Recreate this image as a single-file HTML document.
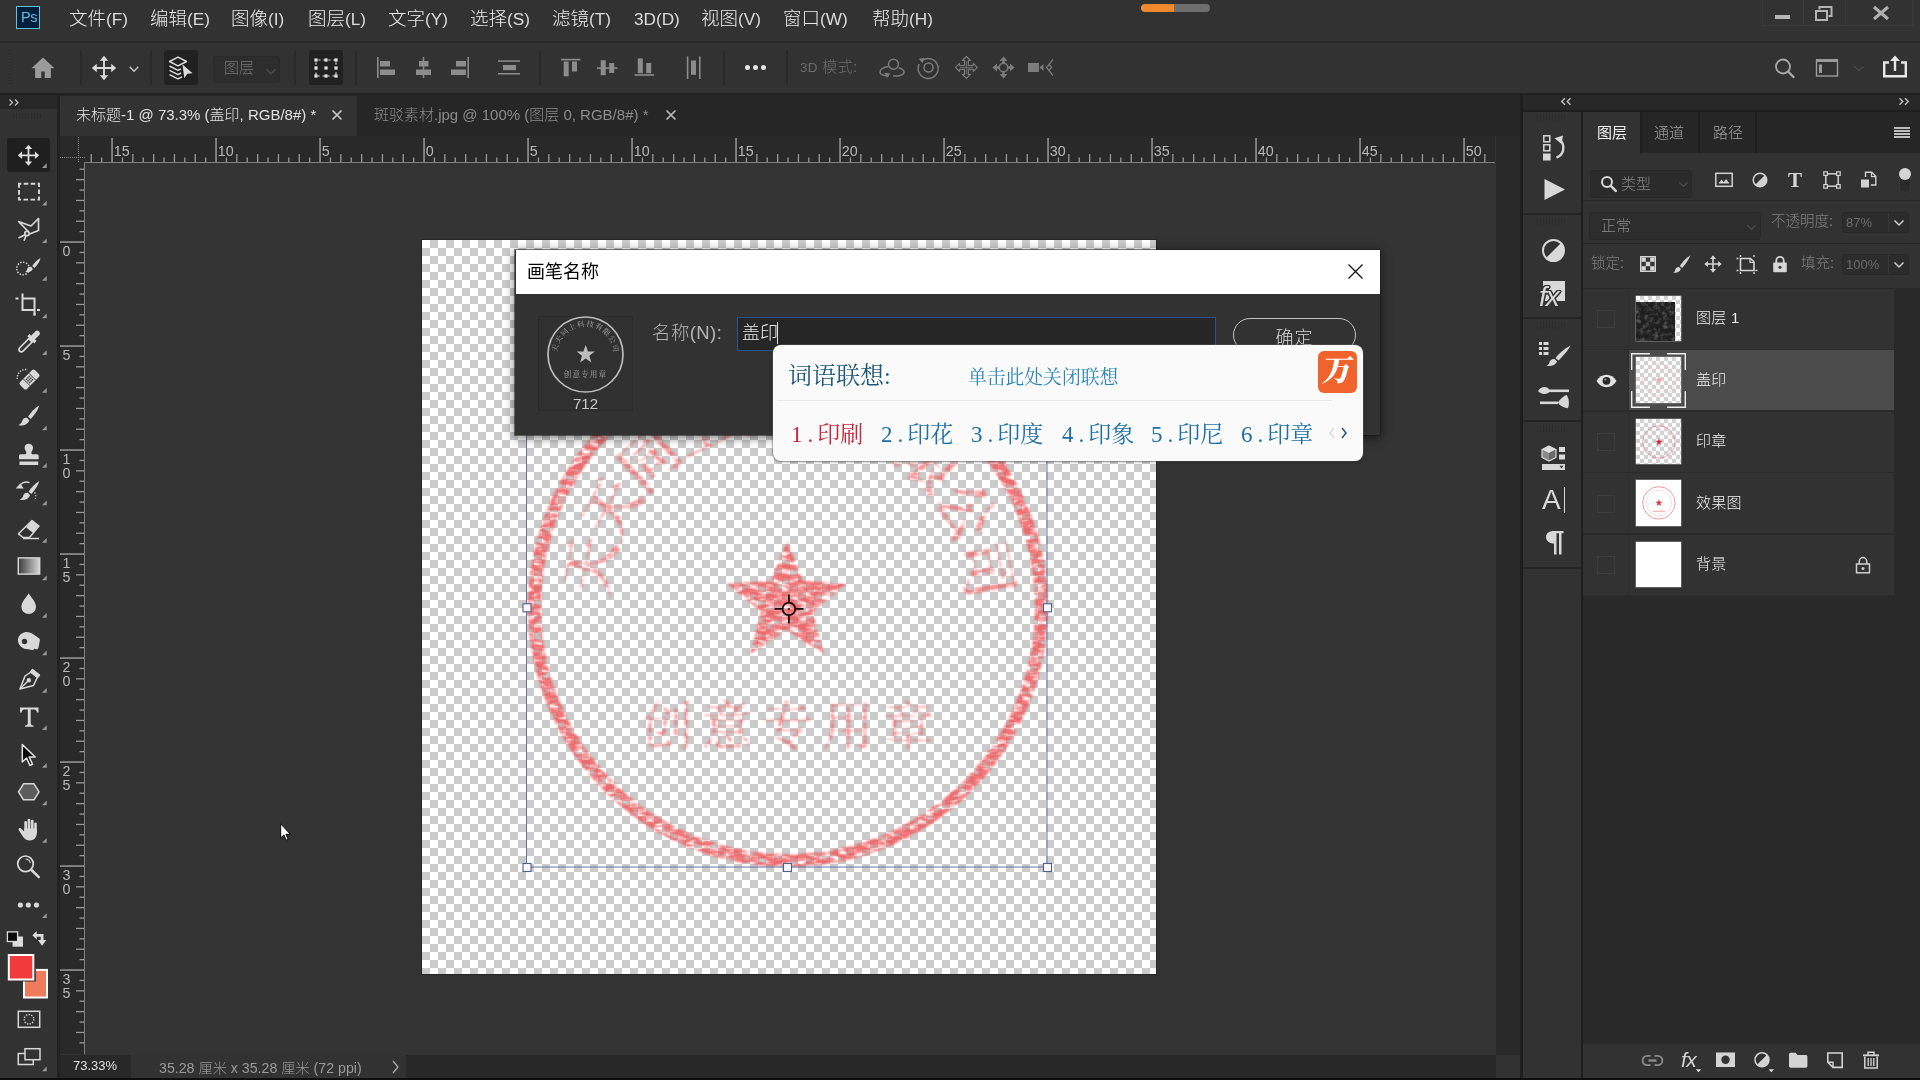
<!DOCTYPE html>
<html lang="zh-CN">
<head>
<meta charset="utf-8">
<title>Photoshop</title>
<style>
html,body{margin:0;padding:0;background:#323232;}
body{width:1920px;height:1080px;overflow:hidden;font-family:"Liberation Sans","Noto Sans CJK SC",sans-serif;color:#d6d6d6;}
#app{position:relative;width:1920px;height:1080px;overflow:hidden;background:#323232;will-change:transform;}
.a{position:absolute;}
.t{position:absolute;white-space:nowrap;line-height:1;}
svg{position:absolute;overflow:visible;}
.mn{top:10px;font-size:18.5px;color:#ececec;font-weight:300;}
.sep{top:50px;width:2px;height:35px;background:#2a2a2a;}
.ime{font-family:"Liberation Serif","Noto Serif CJK SC",serif;}
.dg{display:inline-block;width:13.6px;text-align:center;}
.grip{width:30px;height:7px;background:repeating-linear-gradient(to right,#2a2a2a 0 1px,transparent 1px 3px);opacity:.7}
.la{font-size:17.2px;color:#dcdcdc;}

</style>
</head>
<body>
<div id="app">
<div class="a" style="left:0;top:0;width:1920px;height:41px;background:#323232"></div>
<div class="a" style="left:0;top:41px;width:1920px;height:2px;background:#292929"></div>
<div class="a" style="left:0;top:43px;width:1920px;height:50px;background:#323232"></div>
<div class="a" style="left:0;top:92.500px;width:1920px;height:2.500px;background:#212121"></div>
<!-- left toolbar -->
<div class="a" style="left:0;top:95px;width:57px;height:985px;background:#323232"></div>
<div class="a" style="left:0;top:95px;width:57px;height:14px;background:#272727"></div>
<div class="a" style="left:57px;top:95px;width:3px;height:985px;background:#212121"></div>
<!-- doc tab bar -->
<div class="a" style="left:60px;top:95px;width:1460px;height:41px;background:#262626"></div>
<div class="a" style="left:60px;top:95.500px;width:297px;height:40.500px;background:#323232"></div>
<!-- rulers -->
<div class="a" style="left:60px;top:136px;width:1435px;height:27px;background:#292929"></div>
<div class="a" style="left:60px;top:163px;width:24px;height:891px;background:#292929"></div>
<!-- canvas area -->
<div class="a" style="left:84px;top:163px;width:1411.500px;height:891.500px;background:#333333"></div>
<!-- right scroll -->
<div class="a" style="left:1495.500px;top:136px;width:24.500px;height:918.500px;background:#292929"></div>
<!-- status bar -->
<div class="a" style="left:60px;top:1054.500px;width:1460px;height:24px;background:#282828"></div>
<div class="a" style="left:1495.500px;top:1054.500px;width:24.500px;height:24px;background:#323232"></div>
<!-- right dock -->
<div class="a" style="left:1520px;top:95px;width:400px;height:985px;background:#1e1e1e"></div>
<div class="a" style="left:1522.500px;top:95px;width:397.500px;height:15px;background:#272727"></div>
<div class="a" style="left:1522.500px;top:111.500px;width:58px;height:966.500px;background:#323232"></div>
<div class="a" style="left:1582.500px;top:111.500px;width:337.500px;height:966.500px;background:#323232"></div>
<div class="a" style="left:0;top:1078px;width:1920px;height:2px;background:#0e0e0e"></div>
<!-- PS logo -->
<div class="a" style="left:16px;top:6px;width:24px;height:22.500px;background:#021e3a;border:1.500px solid #5cc3d8;box-sizing:border-box"></div>
<div class="t" style="left:21px;top:10px;font-size:14.500px;color:#5dbde0;letter-spacing:-0.300px;font-family:'Liberation Sans',sans-serif">Ps</div>
<div class="t mn" style="left:69px;">文件<span class="la">(F)</span></div>
<div class="t mn" style="left:150px;">编辑<span class="la">(E)</span></div>
<div class="t mn" style="left:231px;">图像<span class="la">(I)</span></div>
<div class="t mn" style="left:308px;">图层<span class="la">(L)</span></div>
<div class="t mn" style="left:388px;">文字<span class="la">(Y)</span></div>
<div class="t mn" style="left:470px;">选择<span class="la">(S)</span></div>
<div class="t mn" style="left:552px;">滤镜<span class="la">(T)</span></div>
<div class="t mn" style="left:634px;"><span class="la">3D(D)</span></div>
<div class="t mn" style="left:701px;">视图<span class="la">(V)</span></div>
<div class="t mn" style="left:783px;">窗口<span class="la">(W)</span></div>
<div class="t mn" style="left:872px;">帮助<span class="la">(H)</span></div>
<!-- orange progress pill -->
<div class="a" style="left:1141px;top:4px;width:69px;height:8px;border-radius:4px;background:#6e6e6e;overflow:hidden"><div style="width:33px;height:8px;background:#f08a2c;border-radius:4px 0 0 4px"></div></div>
<!-- window controls -->
<div class="a" style="left:1762px;top:0;width:151px;height:26px;border:1px solid #3a3a3a;border-top:none;box-sizing:border-box"></div>
<div class="a" style="left:1803px;top:0;width:1px;height:26px;background:#3a3a3a"></div>
<div class="a" style="left:1845px;top:0;width:1px;height:26px;background:#3a3a3a"></div>
<div class="a" style="left:1775px;top:15px;width:15px;height:4px;background:#b4b4b4"></div>
<svg style="left:1814px;top:5px" width="20" height="18" viewBox="0 0 20 18"><path d="M5.5 4.5V2h12v9h-3" fill="none" stroke="#b4b4b4" stroke-width="2"/><rect x="2" y="6" width="11" height="9" fill="none" stroke="#b4b4b4" stroke-width="2"/></svg>
<svg style="left:1872px;top:5px" width="18" height="16" viewBox="0 0 18 16"><path d="M2 2l14 12M16 2L2 14" fill="none" stroke="#b0b0b0" stroke-width="3"/></svg>
<!-- gripper -->
<div class="a" style="left:8px;top:50px;width:5px;height:35px;background:repeating-linear-gradient(to bottom,#2a2a2a 0 1px,transparent 1px 3px);opacity:.55"></div>
<!-- separators -->
<div class="a sep" style="left:80px"></div>
<div class="a sep" style="left:150px"></div>
<div class="a sep" style="left:294px"></div>
<div class="a sep" style="left:355px"></div>
<div class="a sep" style="left:539px"></div>
<div class="a sep" style="left:723px"></div>
<div class="a sep" style="left:786px"></div>
<!-- home -->
<svg style="left:30px;top:56px" width="26" height="24" viewBox="0 0 26 24"><path d="M13 1.5L1.5 12.2h3.6V22h6.2v-6.6h3.4V22h6.2v-9.8h3.6z" fill="#9b9b9b"/></svg>
<!-- move tool -->
<svg style="left:91px;top:55px" width="26" height="26" viewBox="0 0 26 26"><g fill="none" stroke="#dadada" stroke-width="1.9"><path d="M13 3v20M3 13h20"/></g><path d="M13 0.8l4.2 5H8.8zM13 25.2l4.2-5H8.800zM0.800 13l5-4.200v8.400zM25.200 13l-5-4.200v8.400z" fill="#dadada"/></svg>
<svg style="left:127px;top:65px" width="14" height="9" viewBox="0 0 14 9"><path d="M2.700 1.800L7 6.300L11.300 1.800" fill="none" stroke="#c4c4c4" stroke-width="1.400"/></svg>
<!-- auto select -->
<div class="a" style="left:164px;top:50px;width:34px;height:35px;background:#212121;border-radius:3px"></div>
<svg style="left:168px;top:56px" width="26" height="25" viewBox="0 0 26 25"><g fill="none" stroke="#dcdcdc" stroke-width="1.500" stroke-linejoin="round"><path d="M10 1.200L18.500 5.500L10 9.800L1.500 5.500Z"/><path d="M1.500 10L10 14.300L13 12.800"/><path d="M1.500 14.300L10 18.600L13 17"/><path d="M1.500 18.600L10 22.900L14 20.800"/></g><path d="M14.500 8.500L24.500 17.200L19.300 17.700L16.300 22.300Z" fill="#dcdcdc"/></svg>
<!-- layer dropdown -->
<div class="a" style="left:213px;top:56px;width:67px;height:27px;background:#2d2d2d;border:1px solid #2a2a2a;border-radius:3px;box-sizing:border-box"></div>
<div class="t" style="left:224px;top:60px;font-size:15px;color:#767676;font-weight:300">图层</div>
<svg style="left:264.500px;top:68px" width="12" height="8" viewBox="0 0 12 8"><path d="M1.500 1.500L6 5.800L10.500 1.500" fill="none" stroke="#4e4e4e" stroke-width="1.500"/></svg>
<!-- transform controls -->
<div class="a" style="left:309px;top:50px;width:34px;height:35px;background:#212121;border-radius:3px"></div>
<svg style="left:313px;top:57px" width="26" height="22" viewBox="0 0 26 22"><rect x="3" y="3" width="20" height="16" fill="none" stroke="#dcdcdc" stroke-width="1.100" stroke-dasharray="2.200 2.800" stroke-dashoffset="-2.300"/><g fill="#e4e4e4"><rect x="1.4" y="1.4" width="3.200" height="3.200"/><rect x="11.4" y="1.4" width="3.200" height="3.200"/><rect x="21.4" y="1.4" width="3.200" height="3.200"/><rect x="1.4" y="9.4" width="3.200" height="3.200"/><rect x="11.4" y="9.4" width="3.200" height="3.200"/><rect x="21.4" y="9.4" width="3.200" height="3.200"/><rect x="1.4" y="17.4" width="3.200" height="3.200"/><rect x="11.4" y="17.4" width="3.200" height="3.200"/><rect x="21.4" y="17.4" width="3.200" height="3.200"/></g></svg>
<!-- align icons -->
<svg style="left:370px;top:50px" width="340" height="36" viewBox="370 50 340 36"><g fill="#8c8c8c">
<rect x="377" y="57" width="1.600" height="21"/><rect x="380" y="61" width="10" height="5.500"/><rect x="380" y="69.500" width="15" height="5.500"/>
<rect x="422.700" y="57" width="1.600" height="21"/><rect x="419" y="61" width="9.500" height="5.500"/><rect x="416" y="69.500" width="15" height="5.500"/>
<rect x="467.400" y="57" width="1.600" height="21"/><rect x="456" y="61" width="10" height="5.500"/><rect x="451" y="69.500" width="15" height="5.500"/>
<rect x="498" y="60.300" width="22" height="1.500"/><rect x="498" y="73" width="22" height="1.500"/><rect x="503" y="65" width="13" height="5.200"/>
<rect x="561" y="58.800" width="19.500" height="1.600"/><rect x="563.700" y="61.500" width="5" height="14.800"/><rect x="572" y="61.500" width="5" height="10"/>
<rect x="597" y="67.300" width="20.500" height="1.600"/><rect x="600.700" y="60.200" width="5" height="15"/><rect x="609.200" y="63" width="5" height="10"/>
<rect x="634.500" y="74.200" width="19.500" height="1.600"/><rect x="637.800" y="58.400" width="5" height="14.800"/><rect x="646.200" y="63" width="5" height="10.200"/>
<rect x="686.800" y="56.500" width="1.600" height="22.500"/><rect x="699" y="56.500" width="1.600" height="22.500"/><rect x="691" y="60.500" width="5" height="14.300"/>
</g></svg>
<!-- dots -->
<div class="a" style="left:744.500px;top:65.300px;width:5px;height:5px;border-radius:50%;background:#e6e6e6"></div>
<div class="a" style="left:753px;top:65.300px;width:5px;height:5px;border-radius:50%;background:#e6e6e6"></div>
<div class="a" style="left:761.300px;top:65.300px;width:5px;height:5px;border-radius:50%;background:#e6e6e6"></div>
<div class="t" style="left:800px;top:59px;font-size:15px;color:#6c6c6c;font-weight:300;letter-spacing:0.3px"><span style="font-size:13.5px">3D</span> 模式:</div>
<!-- 3D icons -->
<svg style="left:876px;top:54px" width="182" height="28" viewBox="876 54 182 28"><g fill="none" stroke="#7c7c7c" stroke-width="1.500">
<circle cx="893.500" cy="64.300" r="5"/><path d="M888.500 66.500c-5 0.500-9 3-8.500 6s6 3.500 9 3M893 75.800c4.500 0.500 10.500-0.500 11-3.200 0.400-2-2-3.800-5.500-4.800"/>
<path d="M922.500 60.200A10 10 0 1 1 919.200 64"/><circle cx="928.500" cy="67.500" r="4.500"/>
</g><g fill="#7c7c7c">
<path d="M884.500 72.800l6 0.700-3.500 4.300z"/><path d="M918.800 58.800l5.700-0.800-2 5.300z"/>
<path d="M968.3 65.5L968.3 60.5L970.4 60.5L966.4 56.5L962.4 60.5L964.5 60.5L964.5 65.5L964.5 65.5L959.5 65.5L959.5 63.4L955.5 67.4L959.5 71.4L959.5 69.3L964.5 69.3L964.5 69.3L964.5 74.3L962.4 74.3L966.4 78.3L970.4 74.3L968.3 74.3L968.3 69.3L968.3 69.3L973.3 69.3L973.3 71.4L977.3 67.4L973.3 63.4L973.3 65.5L968.3 65.5z" fill="none" stroke="#7c7c7c" stroke-width="1.200" stroke-linejoin="round"/><path d="M966.400 61v13M960 67.400h13" stroke="#7c7c7c" stroke-width="0.800"/>
<path d="M1003.500 56.500l4 4.500h-8zM1003.500 78.500l4-4.500h-8zM992.500 67.500l4.500-4v8zM1014.500 67.500l-4.500-4v8z"/>
</g><circle cx="1003.500" cy="67.500" r="4.300" fill="none" stroke="#7c7c7c" stroke-width="1.500"/>
<path d="M1003.500 61v2M1003.500 72v2M997 67.500h2M1008 67.500h2" stroke="#7c7c7c" stroke-width="2.500"/>
<rect x="1028" y="63" width="11" height="9" fill="#7c7c7c"/><path d="M1039.500 67.500l4-3.500v7z" fill="#7c7c7c"/><path d="M1053 59.500l-6.500 8l6.500 8M1049 64.500l2.500 3l-2.500 3" fill="none" stroke="#7c7c7c" stroke-width="1.200"/>
</svg>
<!-- right side icons -->
<svg style="left:1772px;top:56px" width="24" height="24" viewBox="1772 56 24 24"><circle cx="1783" cy="66.500" r="7" fill="none" stroke="#a8a8a8" stroke-width="1.800"/><path d="M1788 71.500l5.500 5.500" stroke="#a8a8a8" stroke-width="2.400" stroke-linecap="round"/></svg>
<svg style="left:1815px;top:58px" width="24" height="20" viewBox="0 0 24 20"><rect x="1.500" y="2.500" width="21" height="15.500" fill="none" stroke="#9a9a9a" stroke-width="1.400"/><rect x="1" y="1" width="22" height="3" fill="#9a9a9a"/><rect x="4" y="6.500" width="3" height="8.500" fill="#9a9a9a"/></svg>
<svg style="left:1853px;top:65px" width="12" height="8" viewBox="0 0 12 8"><path d="M1.500 1.500L6 5.500L10.500 1.500" fill="none" stroke="#484848" stroke-width="1.600"/></svg>
<svg style="left:1882px;top:55px" width="26" height="24" viewBox="0 0 26 24"><path d="M7 7.500H2.200V21.200H23.800V7.500H19" fill="none" stroke="#e8e8e8" stroke-width="2.400"/><path d="M13 16V4" stroke="#e8e8e8" stroke-width="2.400"/><path d="M13 0.500l5 5.500h-10z" fill="#e8e8e8"/></svg>
<div class="t" style="left:76px;top:107px;font-size:15px;color:#e2e2e2;font-weight:300">未标题-1 @ 73.3% (盖印, RGB/8#) *</div>
<svg style="left:331px;top:109px" width="12" height="12" viewBox="0 0 12 12"><path d="M1.500 1.500l9 9M10.500 1.500l-9 9" stroke="#c8c8c8" stroke-width="1.700" fill="none"/></svg>
<div class="t" style="left:374px;top:107px;font-size:15px;color:#8c8c8c;font-weight:300">斑驳素材.jpg @ 100% (图层 0, RGB/8#) *</div>
<svg style="left:665px;top:109px" width="12" height="12" viewBox="0 0 12 12"><path d="M1.500 1.500l9 9M10.500 1.500l-9 9" stroke="#b8b8b8" stroke-width="1.700" fill="none"/></svg>
<!-- left collapse arrows -->
<svg style="left:8px;top:98px" width="14" height="9" viewBox="0 0 14 9"><path d="M1.500 1.500l3 3-3 3M7 1.500l3 3-3 3" stroke="#c0c0c0" stroke-width="1.300" fill="none"/></svg>
<!-- status bar -->
<div class="a" style="left:131px;top:1054px;width:275px;height:24px;background:#323232"></div>
<div class="t" style="left:73px;top:1059px;font-size:13px;color:#e0e0e0">73.33%</div>
<div class="t" style="left:159px;top:1060.500px;font-size:14.200px;color:#9a9a9a;font-weight:300">35.28 厘米 x 35.28 厘米 (72 ppi)</div>
<svg style="left:391px;top:1060px" width="9" height="14" viewBox="0 0 9 14"><path d="M2 1l5 6-5 6" stroke="#b0b0b0" stroke-width="1.200" fill="none"/></svg>
<svg style="left:60px;top:135px" width="1435" height="919" viewBox="60 135 1435 919" font-family="Liberation Sans, sans-serif" font-size="14.300" fill="#b8b8b8">
<path d="M60 157.500H86M78.500 137V163" stroke="#8a8a8a" stroke-width="1" stroke-dasharray="1 1" fill="none"/>
<rect x="84" y="162" width="1411" height="1" fill="#808080"/>
<rect x="84" y="162" width="1" height="892" fill="#808080"/>
<text x="113.8" y="156">15</text>
<text x="217.8" y="156">10</text>
<text x="321.8" y="156">5</text>
<text x="425.8" y="156">0</text>
<text x="529.8" y="156">5</text>
<text x="633.8" y="156">10</text>
<text x="737.8" y="156">15</text>
<text x="841.8" y="156">20</text>
<text x="945.8" y="156">25</text>
<text x="1049.8" y="156">30</text>
<text x="1153.8" y="156">35</text>
<text x="1257.8" y="156">40</text>
<text x="1361.8" y="156">45</text>
<text x="1465.8" y="156">50</text>
<text x="62.500" y="256.2">0</text>
<text x="62.500" y="360.2">5</text>
<text x="62.500" y="464.2">1</text>
<text x="62.500" y="478.4">0</text>
<text x="62.500" y="568.2">1</text>
<text x="62.500" y="582.4">5</text>
<text x="62.500" y="672.2">2</text>
<text x="62.500" y="686.4">0</text>
<text x="62.500" y="776.2">2</text>
<text x="62.500" y="790.4">5</text>
<text x="62.500" y="880.2">3</text>
<text x="62.500" y="894.4">0</text>
<text x="62.500" y="984.2">3</text>
<text x="62.500" y="998.4">5</text>
<g fill="#9a9a9a"><rect x="90.6" y="154" width="1.300" height="8"/><rect x="101.0" y="157.500" width="1.300" height="4.500"/><rect x="111.3" y="138" width="1.500" height="24"/><rect x="121.8" y="157.500" width="1.300" height="4.500"/><rect x="132.2" y="154" width="1.300" height="8"/><rect x="142.6" y="157.500" width="1.300" height="4.500"/><rect x="153.0" y="154" width="1.300" height="8"/><rect x="163.4" y="157.500" width="1.300" height="4.500"/><rect x="173.8" y="154" width="1.300" height="8"/><rect x="184.2" y="157.500" width="1.300" height="4.500"/><rect x="194.6" y="154" width="1.300" height="8"/><rect x="205.0" y="157.500" width="1.300" height="4.500"/><rect x="215.3" y="138" width="1.500" height="24"/><rect x="225.8" y="157.500" width="1.300" height="4.500"/><rect x="236.2" y="154" width="1.300" height="8"/><rect x="246.6" y="157.500" width="1.300" height="4.500"/><rect x="257.0" y="154" width="1.300" height="8"/><rect x="267.4" y="157.500" width="1.300" height="4.500"/><rect x="277.8" y="154" width="1.300" height="8"/><rect x="288.2" y="157.500" width="1.300" height="4.500"/><rect x="298.6" y="154" width="1.300" height="8"/><rect x="309.0" y="157.500" width="1.300" height="4.500"/><rect x="319.3" y="138" width="1.500" height="24"/><rect x="329.8" y="157.500" width="1.300" height="4.500"/><rect x="340.2" y="154" width="1.300" height="8"/><rect x="350.6" y="157.500" width="1.300" height="4.500"/><rect x="361.0" y="154" width="1.300" height="8"/><rect x="371.4" y="157.500" width="1.300" height="4.500"/><rect x="381.8" y="154" width="1.300" height="8"/><rect x="392.2" y="157.500" width="1.300" height="4.500"/><rect x="402.6" y="154" width="1.300" height="8"/><rect x="413.0" y="157.500" width="1.300" height="4.500"/><rect x="423.3" y="138" width="1.500" height="24"/><rect x="433.8" y="157.500" width="1.300" height="4.500"/><rect x="444.2" y="154" width="1.300" height="8"/><rect x="454.6" y="157.500" width="1.300" height="4.500"/><rect x="465.0" y="154" width="1.300" height="8"/><rect x="475.4" y="157.500" width="1.300" height="4.500"/><rect x="485.8" y="154" width="1.300" height="8"/><rect x="496.2" y="157.500" width="1.300" height="4.500"/><rect x="506.6" y="154" width="1.300" height="8"/><rect x="517.0" y="157.500" width="1.300" height="4.500"/><rect x="527.3" y="138" width="1.500" height="24"/><rect x="537.8" y="157.500" width="1.300" height="4.500"/><rect x="548.2" y="154" width="1.300" height="8"/><rect x="558.6" y="157.500" width="1.300" height="4.500"/><rect x="569.0" y="154" width="1.300" height="8"/><rect x="579.4" y="157.500" width="1.300" height="4.500"/><rect x="589.8" y="154" width="1.300" height="8"/><rect x="600.2" y="157.500" width="1.300" height="4.500"/><rect x="610.6" y="154" width="1.300" height="8"/><rect x="621.0" y="157.500" width="1.300" height="4.500"/><rect x="631.3" y="138" width="1.500" height="24"/><rect x="641.8" y="157.500" width="1.300" height="4.500"/><rect x="652.2" y="154" width="1.300" height="8"/><rect x="662.6" y="157.500" width="1.300" height="4.500"/><rect x="673.0" y="154" width="1.300" height="8"/><rect x="683.4" y="157.500" width="1.300" height="4.500"/><rect x="693.8" y="154" width="1.300" height="8"/><rect x="704.2" y="157.500" width="1.300" height="4.500"/><rect x="714.6" y="154" width="1.300" height="8"/><rect x="725.0" y="157.500" width="1.300" height="4.500"/><rect x="735.3" y="138" width="1.500" height="24"/><rect x="745.8" y="157.500" width="1.300" height="4.500"/><rect x="756.2" y="154" width="1.300" height="8"/><rect x="766.6" y="157.500" width="1.300" height="4.500"/><rect x="777.0" y="154" width="1.300" height="8"/><rect x="787.4" y="157.500" width="1.300" height="4.500"/><rect x="797.8" y="154" width="1.300" height="8"/><rect x="808.2" y="157.500" width="1.300" height="4.500"/><rect x="818.6" y="154" width="1.300" height="8"/><rect x="829.0" y="157.500" width="1.300" height="4.500"/><rect x="839.3" y="138" width="1.500" height="24"/><rect x="849.8" y="157.500" width="1.300" height="4.500"/><rect x="860.2" y="154" width="1.300" height="8"/><rect x="870.6" y="157.500" width="1.300" height="4.500"/><rect x="881.0" y="154" width="1.300" height="8"/><rect x="891.4" y="157.500" width="1.300" height="4.500"/><rect x="901.8" y="154" width="1.300" height="8"/><rect x="912.2" y="157.500" width="1.300" height="4.500"/><rect x="922.6" y="154" width="1.300" height="8"/><rect x="933.0" y="157.500" width="1.300" height="4.500"/><rect x="943.3" y="138" width="1.500" height="24"/><rect x="953.8" y="157.500" width="1.300" height="4.500"/><rect x="964.2" y="154" width="1.300" height="8"/><rect x="974.6" y="157.500" width="1.300" height="4.500"/><rect x="985.0" y="154" width="1.300" height="8"/><rect x="995.4" y="157.500" width="1.300" height="4.500"/><rect x="1005.8" y="154" width="1.300" height="8"/><rect x="1016.2" y="157.500" width="1.300" height="4.500"/><rect x="1026.6" y="154" width="1.300" height="8"/><rect x="1037.0" y="157.500" width="1.300" height="4.500"/><rect x="1047.3" y="138" width="1.500" height="24"/><rect x="1057.8" y="157.500" width="1.300" height="4.500"/><rect x="1068.2" y="154" width="1.300" height="8"/><rect x="1078.6" y="157.500" width="1.300" height="4.500"/><rect x="1089.0" y="154" width="1.300" height="8"/><rect x="1099.4" y="157.500" width="1.300" height="4.500"/><rect x="1109.8" y="154" width="1.300" height="8"/><rect x="1120.2" y="157.500" width="1.300" height="4.500"/><rect x="1130.6" y="154" width="1.300" height="8"/><rect x="1141.0" y="157.500" width="1.300" height="4.500"/><rect x="1151.3" y="138" width="1.500" height="24"/><rect x="1161.8" y="157.500" width="1.300" height="4.500"/><rect x="1172.2" y="154" width="1.300" height="8"/><rect x="1182.6" y="157.500" width="1.300" height="4.500"/><rect x="1193.0" y="154" width="1.300" height="8"/><rect x="1203.4" y="157.500" width="1.300" height="4.500"/><rect x="1213.8" y="154" width="1.300" height="8"/><rect x="1224.2" y="157.500" width="1.300" height="4.500"/><rect x="1234.6" y="154" width="1.300" height="8"/><rect x="1245.0" y="157.500" width="1.300" height="4.500"/><rect x="1255.3" y="138" width="1.500" height="24"/><rect x="1265.8" y="157.500" width="1.300" height="4.500"/><rect x="1276.2" y="154" width="1.300" height="8"/><rect x="1286.6" y="157.500" width="1.300" height="4.500"/><rect x="1297.0" y="154" width="1.300" height="8"/><rect x="1307.4" y="157.500" width="1.300" height="4.500"/><rect x="1317.8" y="154" width="1.300" height="8"/><rect x="1328.2" y="157.500" width="1.300" height="4.500"/><rect x="1338.6" y="154" width="1.300" height="8"/><rect x="1349.0" y="157.500" width="1.300" height="4.500"/><rect x="1359.3" y="138" width="1.500" height="24"/><rect x="1369.8" y="157.500" width="1.300" height="4.500"/><rect x="1380.2" y="154" width="1.300" height="8"/><rect x="1390.6" y="157.500" width="1.300" height="4.500"/><rect x="1401.0" y="154" width="1.300" height="8"/><rect x="1411.4" y="157.500" width="1.300" height="4.500"/><rect x="1421.8" y="154" width="1.300" height="8"/><rect x="1432.2" y="157.500" width="1.300" height="4.500"/><rect x="1442.6" y="154" width="1.300" height="8"/><rect x="1453.0" y="157.500" width="1.300" height="4.500"/><rect x="1463.3" y="138" width="1.500" height="24"/><rect x="1473.8" y="157.500" width="1.300" height="4.500"/><rect x="1484.2" y="154" width="1.300" height="8"/><rect x="79.500" y="168.6" width="4.500" height="1.300"/><rect x="76" y="179.0" width="8" height="1.300"/><rect x="79.500" y="189.4" width="4.500" height="1.300"/><rect x="76" y="199.8" width="8" height="1.300"/><rect x="79.500" y="210.2" width="4.500" height="1.300"/><rect x="76" y="220.6" width="8" height="1.300"/><rect x="79.500" y="231.0" width="4.500" height="1.300"/><rect x="60" y="241.3" width="24" height="1.500"/><rect x="79.500" y="251.8" width="4.500" height="1.300"/><rect x="76" y="262.2" width="8" height="1.300"/><rect x="79.500" y="272.6" width="4.500" height="1.300"/><rect x="76" y="283.0" width="8" height="1.300"/><rect x="79.500" y="293.4" width="4.500" height="1.300"/><rect x="76" y="303.8" width="8" height="1.300"/><rect x="79.500" y="314.2" width="4.500" height="1.300"/><rect x="76" y="324.6" width="8" height="1.300"/><rect x="79.500" y="335.0" width="4.500" height="1.300"/><rect x="60" y="345.3" width="24" height="1.500"/><rect x="79.500" y="355.8" width="4.500" height="1.300"/><rect x="76" y="366.2" width="8" height="1.300"/><rect x="79.500" y="376.6" width="4.500" height="1.300"/><rect x="76" y="387.0" width="8" height="1.300"/><rect x="79.500" y="397.4" width="4.500" height="1.300"/><rect x="76" y="407.8" width="8" height="1.300"/><rect x="79.500" y="418.2" width="4.500" height="1.300"/><rect x="76" y="428.6" width="8" height="1.300"/><rect x="79.500" y="439.0" width="4.500" height="1.300"/><rect x="60" y="449.3" width="24" height="1.500"/><rect x="79.500" y="459.8" width="4.500" height="1.300"/><rect x="76" y="470.2" width="8" height="1.300"/><rect x="79.500" y="480.6" width="4.500" height="1.300"/><rect x="76" y="491.0" width="8" height="1.300"/><rect x="79.500" y="501.4" width="4.500" height="1.300"/><rect x="76" y="511.8" width="8" height="1.300"/><rect x="79.500" y="522.2" width="4.500" height="1.300"/><rect x="76" y="532.6" width="8" height="1.300"/><rect x="79.500" y="543.0" width="4.500" height="1.300"/><rect x="60" y="553.3" width="24" height="1.500"/><rect x="79.500" y="563.8" width="4.500" height="1.300"/><rect x="76" y="574.2" width="8" height="1.300"/><rect x="79.500" y="584.6" width="4.500" height="1.300"/><rect x="76" y="595.0" width="8" height="1.300"/><rect x="79.500" y="605.4" width="4.500" height="1.300"/><rect x="76" y="615.8" width="8" height="1.300"/><rect x="79.500" y="626.2" width="4.500" height="1.300"/><rect x="76" y="636.6" width="8" height="1.300"/><rect x="79.500" y="647.0" width="4.500" height="1.300"/><rect x="60" y="657.3" width="24" height="1.500"/><rect x="79.500" y="667.8" width="4.500" height="1.300"/><rect x="76" y="678.2" width="8" height="1.300"/><rect x="79.500" y="688.6" width="4.500" height="1.300"/><rect x="76" y="699.0" width="8" height="1.300"/><rect x="79.500" y="709.4" width="4.500" height="1.300"/><rect x="76" y="719.8" width="8" height="1.300"/><rect x="79.500" y="730.2" width="4.500" height="1.300"/><rect x="76" y="740.6" width="8" height="1.300"/><rect x="79.500" y="751.0" width="4.500" height="1.300"/><rect x="60" y="761.3" width="24" height="1.500"/><rect x="79.500" y="771.8" width="4.500" height="1.300"/><rect x="76" y="782.2" width="8" height="1.300"/><rect x="79.500" y="792.6" width="4.500" height="1.300"/><rect x="76" y="803.0" width="8" height="1.300"/><rect x="79.500" y="813.4" width="4.500" height="1.300"/><rect x="76" y="823.8" width="8" height="1.300"/><rect x="79.500" y="834.2" width="4.500" height="1.300"/><rect x="76" y="844.6" width="8" height="1.300"/><rect x="79.500" y="855.0" width="4.500" height="1.300"/><rect x="60" y="865.3" width="24" height="1.500"/><rect x="79.500" y="875.8" width="4.500" height="1.300"/><rect x="76" y="886.2" width="8" height="1.300"/><rect x="79.500" y="896.6" width="4.500" height="1.300"/><rect x="76" y="907.0" width="8" height="1.300"/><rect x="79.500" y="917.4" width="4.500" height="1.300"/><rect x="76" y="927.8" width="8" height="1.300"/><rect x="79.500" y="938.2" width="4.500" height="1.300"/><rect x="76" y="948.6" width="8" height="1.300"/><rect x="79.500" y="959.0" width="4.500" height="1.300"/><rect x="60" y="969.3" width="24" height="1.500"/><rect x="79.500" y="979.8" width="4.500" height="1.300"/><rect x="76" y="990.2" width="8" height="1.300"/><rect x="79.500" y="1000.6" width="4.500" height="1.300"/><rect x="76" y="1011.0" width="8" height="1.300"/><rect x="79.500" y="1021.4" width="4.500" height="1.300"/><rect x="76" y="1031.8" width="8" height="1.300"/><rect x="79.500" y="1042.2" width="4.500" height="1.300"/></g>
</svg>
<div class="a" style="left:422px;top:240px;width:734px;height:734px;background:repeating-conic-gradient(#cbcbcb 0 25%,#ffffff 0 50%) 0 0/16px 16px;box-shadow:0 0 0 1px #252525"></div>
<svg style="left:422px;top:240px" width="734" height="733" viewBox="422 240 734 733" font-family="Liberation Serif, Noto Serif CJK SC, serif">
<defs><filter id="rough" x="-5%" y="-5%" width="110%" height="110%"><feTurbulence type="fractalNoise" baseFrequency="0.09 0.2" numOctaves="2" seed="7" result="n"/><feColorMatrix in="n" type="matrix" values="0 0 0 0 0  0 0 0 0 0  0 0 0 0 0  2.500 0 0 0 -0.520" result="m"/><feGaussianBlur in="SourceGraphic" stdDeviation="0.900" result="b"/><feComposite in="b" in2="m" operator="in"/></filter></defs>
<g filter="url(#rough)" opacity="0.820">
<circle cx="788.0" cy="607.0" r="253.500" fill="none" stroke="#f2585c" stroke-width="13"/>
<polygon points="787.0,540.0 802.9,581.1 846.9,583.5 812.8,611.4 824.0,654.0 787.0,630.1 750.0,654.0 761.2,611.4 727.1,583.5 771.1,581.1" fill="#f2585c"/>
<text x="0" y="0" font-size="60" font-weight="600" fill="#f2585c" fill-opacity="0.800" text-anchor="middle" transform="translate(590.7 566.0) rotate(-78.2) scale(0.96 1)" dy="21">天</text>
<text x="0" y="0" font-size="60" font-weight="600" fill="#f2585c" fill-opacity="0.800" text-anchor="middle" transform="translate(612.2 508.5) rotate(-60.8) scale(0.96 1)" dy="21">天</text>
<text x="0" y="0" font-size="60" font-weight="600" fill="#f2585c" fill-opacity="0.800" text-anchor="middle" transform="translate(649.9 460.2) rotate(-43.2) scale(0.96 1)" dy="21">同</text>
<text x="0" y="0" font-size="60" font-weight="600" fill="#f2585c" fill-opacity="0.800" text-anchor="middle" transform="translate(700.5 425.5) rotate(-25.8) scale(0.96 1)" dy="21">上</text>
<text x="0" y="0" font-size="60" font-weight="600" fill="#f2585c" fill-opacity="0.800" text-anchor="middle" transform="translate(759.1 407.6) rotate(-8.2) scale(0.96 1)" dy="21">科</text>
<text x="0" y="0" font-size="60" font-weight="600" fill="#f2585c" fill-opacity="0.800" text-anchor="middle" transform="translate(820.4 408.1) rotate(9.2) scale(0.96 1)" dy="21">技</text>
<text x="0" y="0" font-size="60" font-weight="600" fill="#f2585c" fill-opacity="0.800" text-anchor="middle" transform="translate(878.7 427.1) rotate(26.8) scale(0.96 1)" dy="21">有</text>
<text x="0" y="0" font-size="60" font-weight="600" fill="#f2585c" fill-opacity="0.800" text-anchor="middle" transform="translate(928.6 462.7) rotate(44.2) scale(0.96 1)" dy="21">限</text>
<text x="0" y="0" font-size="60" font-weight="600" fill="#f2585c" fill-opacity="0.800" text-anchor="middle" transform="translate(965.5 511.6) rotate(61.8) scale(0.96 1)" dy="21">公</text>
<text x="0" y="0" font-size="60" font-weight="600" fill="#f2585c" fill-opacity="0.800" text-anchor="middle" transform="translate(986.0 569.4) rotate(79.2) scale(0.96 1)" dy="21">司</text>
<text x="667.0" y="745" font-size="52" fill="#f2585c" fill-opacity="0.780" text-anchor="middle">创</text>
<text x="727.3" y="745" font-size="52" fill="#f2585c" fill-opacity="0.780" text-anchor="middle">意</text>
<text x="787.6" y="745" font-size="52" fill="#f2585c" fill-opacity="0.780" text-anchor="middle">专</text>
<text x="847.9" y="745" font-size="52" fill="#f2585c" fill-opacity="0.780" text-anchor="middle">用</text>
<text x="908.2" y="745" font-size="52" fill="#f2585c" fill-opacity="0.780" text-anchor="middle">章</text>
</g>
<rect x="526.500" y="347.500" width="520.500" height="519.500" fill="none" stroke="#5f73a8" stroke-width="1"/>
<rect x="523.0" y="603.8" width="8" height="8" fill="#fbfaff" stroke="#4f5f90" stroke-width="1.100"/>
<rect x="1043.5" y="603.8" width="8" height="8" fill="#fbfaff" stroke="#4f5f90" stroke-width="1.100"/>
<rect x="523.0" y="863.5" width="8" height="8" fill="#fbfaff" stroke="#4f5f90" stroke-width="1.100"/>
<rect x="783.5" y="863.5" width="8" height="8" fill="#fbfaff" stroke="#4f5f90" stroke-width="1.100"/>
<rect x="1043.5" y="863.5" width="8" height="8" fill="#fbfaff" stroke="#4f5f90" stroke-width="1.100"/>
<rect x="523.0" y="343.5" width="8" height="8" fill="#fbfaff" stroke="#4f5f90" stroke-width="1.100"/>
<rect x="783.5" y="343.5" width="8" height="8" fill="#fbfaff" stroke="#4f5f90" stroke-width="1.100"/>
<rect x="1043.5" y="343.5" width="8" height="8" fill="#fbfaff" stroke="#4f5f90" stroke-width="1.100"/>
<g fill="none" stroke="#1c0c0c" stroke-width="1.800"><circle cx="788.900" cy="608.900" r="6.300"/><path d="M788.900 594.500v8.500M788.900 615v8.500M774.500 608.900h8.500M795 608.900h8.500"/></g><circle cx="788.900" cy="608.900" r="1.200" fill="#7a1f25"/>
</svg>
<!-- left toolbar -->
<div class="a" style="left:13px;top:113px;width:30px;height:6px;background:repeating-linear-gradient(to right,#2a2a2a 0 1px,transparent 1px 3px)"></div>
<div class="a" style="left:7px;top:138px;width:43px;height:34px;background:#1f1f1f;border-radius:3px"></div>
<svg style="left:0;top:130px" width="60" height="950" viewBox="0 130 60 950">
<g fill="#9a9a9a">
<path d="M46.700 163.300V168H42z"/><path d="M46.700 200.800V205.500H42z"/><path d="M46.700 238.400V243.100H42z"/><path d="M46.700 276V280.700H42z"/><path d="M46.700 313.600V318.300H42z"/>
<path d="M46.700 350.300V355H42z"/><path d="M46.700 388V392.700H42z"/><path d="M46.700 425.500V430.200H42z"/><path d="M46.700 463V467.700H42z"/><path d="M46.700 500.500V505.200H42z"/>
<path d="M46.700 538V542.700H42z"/><path d="M46.700 575.500V580.200H42z"/><path d="M46.700 613V617.700H42z"/><path d="M46.700 650.500V655.200H42z"/><path d="M46.700 688V692.700H42z"/>
<path d="M46.700 725.300V730H42z"/><path d="M46.700 763V767.700H42z"/><path d="M46.700 800.500V805.200H42z"/><path d="M46.700 838V842.700H42z"/><path d="M46.700 913.300V918H42z"/><path d="M46.700 1066.500V1071.200H42z"/>
</g>
<!-- move -->
<g><path d="M28.500 147.500v15.500M20.500 155.300h16" stroke="#dedede" stroke-width="1.800" fill="none"/><path d="M28.500 144.800l3.700 4.300h-7.400zM28.500 165.800l3.700-4.300h-7.400zM17.800 155.300l4.300-3.700v7.400zM39.200 155.300l-4.300-3.700v7.400z" fill="#dedede"/></g>
<!-- marquee -->
<rect x="19" y="183.800" width="20" height="15.800" fill="none" stroke="#d8d8d8" stroke-width="1.900" stroke-dasharray="4.600 2.400" stroke-dashoffset="2.300"/>
<!-- polygonal lasso -->
<g fill="none" stroke="#d8d8d8" stroke-width="1.700" stroke-linejoin="round"><path d="M28.300 231.500L18.500 221.500L31 226L38.500 218.500L38.500 230.500L29.500 234"/><circle cx="27" cy="233.500" r="2.200"/><path d="M25.200 234.800l-6.700 3.200M26 235.800l-2 5"/></g>
<!-- quick selection -->
<g><circle cx="23" cy="268.500" r="6.300" fill="none" stroke="#d8d8d8" stroke-width="1.500" stroke-dasharray="1.400 1.500"/><path d="M40.500 258c-3 1.500-6.500 5-8.300 8l2.300 2c2.800-2.800 5.300-6.300 6-10z" fill="#d8d8d8"/><path d="M31.300 266.800c-2.300-.5-4 .8-4.300 2.700-.2 1.200-.8 2-1.800 2.500 3 .8 6.200-.3 7.700-3z" fill="#d8d8d8"/></g>
<!-- crop -->
<g fill="none" stroke="#d8d8d8" stroke-width="2"><path d="M22.500 293.500v16.500h12"/><path d="M15.500 298.500h3M22 298.500h12.500v11.500M34.500 313v2.500M37 310h3" /><path d="M34.500 310v5.500" /></g>
<!-- eyedropper -->
<g><path d="M29.500 338l3.300 3.300-9.500 9.500c-1 1-2.600 1.200-3.700.4-.8-1.100-.6-2.700.4-3.700z" fill="none" stroke="#d8d8d8" stroke-width="1.700"/><g transform="rotate(45 32 338.500)" fill="#d8d8d8"><rect x="27" y="337" width="10" height="3.300" rx="0.500"/><rect x="29.300" y="328.500" width="5.400" height="10" rx="2.700"/><rect x="29.600" y="339.500" width="4.800" height="2.200"/></g></g>
<!-- spot healing -->
<g><path d="M17.300 379a8.500 8.500 0 0 1 10.500-9.300" fill="none" stroke="#d8d8d8" stroke-width="1.500" stroke-dasharray="1.200 1.500"/><g transform="rotate(-45 29.500 379.500)"><rect x="19" y="374.700" width="21" height="9.600" rx="2" fill="#d8d8d8"/><path d="M25.500 374.700v9.600M33.500 374.700v9.600" stroke="#323232" stroke-width="0.900"/><g fill="#323232"><circle cx="27.500" cy="377.200" r="0.800"/><circle cx="29.500" cy="377.200" r="0.800"/><circle cx="31.500" cy="377.200" r="0.800"/><circle cx="27.500" cy="379.500" r="0.800"/><circle cx="29.500" cy="379.500" r="0.800"/><circle cx="31.500" cy="379.500" r="0.800"/><circle cx="27.500" cy="381.800" r="0.800"/><circle cx="29.500" cy="381.800" r="0.800"/><circle cx="31.500" cy="381.800" r="0.800"/></g></g></g>
<!-- brush -->
<g fill="#d8d8d8"><path d="M39.300 405.600c-4.500 2.600-9 7.300-11.200 11.200l2.700 2.300c3.400-3.700 7-8.300 8.500-13.500z"/><path d="M27 417.800c-2.700-.4-4.500 1.300-4.900 3.500-.3 1.500-1.500 2.800-3.600 3.600 3.800 1.400 8.800.2 10.900-4.500z"/></g>
<!-- stamp -->
<g fill="#d8d8d8"><path d="M28.800 443.700a4.300 4.300 0 0 1 4.300 4.300c0 1.800-1.500 3-1.700 4.500-.1 1 .3 1.800 1.400 1.800h4.200c1 0 1.700.7 1.700 1.700v3.300H19v-3.300c0-1 .7-1.700 1.700-1.700h4.200c1.100 0 1.500-.8 1.400-1.800-.2-1.500-1.700-2.700-1.700-4.500a4.300 4.300 0 0 1 4.200-4.300z"/><rect x="19.500" y="461.500" width="18.700" height="3.500"/></g>
<!-- history brush -->
<g fill="#d8d8d8"><path d="M39.300 481c-4.300 2.600-8.500 7-10.600 10.800l2.600 2.200c3.200-3.600 6.600-8 8-13z"/><path d="M27.800 492.800c-2.600-.4-4.300 1.200-4.700 3.300-.3 1.500-1.400 2.700-3.400 3.500 3.600 1.300 8.400.2 10.400-4.300z"/><path d="M15.700 488.500l4.500-5 3.500 5z"/><path d="M20.500 484.500c2.500-2.500 6-3 9-1.800" fill="none" stroke="#d8d8d8" stroke-width="1.400"/><path d="M34.500 492.500c1.500 2 1.800 4.500 .5 7" fill="none" stroke="#d8d8d8" stroke-width="1.300" stroke-dasharray="1.300 1.500"/></g>
<!-- eraser -->
<g><path d="M32 520.500l7 5.500-9.500 11.500h-6.500l-4.500-3.700z" fill="none" stroke="#d8d8d8" stroke-width="1.500" stroke-linejoin="round"/><path d="M32 520.500l7 5.500-5.800 7-7-5.500z" fill="#d8d8d8"/><path d="M23 538.500h16" stroke="#d8d8d8" stroke-width="1.500"/></g>
<!-- gradient -->
<defs><linearGradient id="gr1" x1="0" x2="1"><stop offset="0" stop-color="#3a3a3a"/><stop offset="1" stop-color="#d8d8d8"/></linearGradient></defs>
<rect x="18.300" y="557.900" width="21.400" height="16.200" fill="url(#gr1)" stroke="#d8d8d8" stroke-width="1.400"/>
<!-- blur drop -->
<path d="M28.700 593.300c2.500 4.500 7.300 8.500 7.300 13.500a7.300 7.300 0 0 1-14.600 0c0-5 4.800-9 7.300-13.500z" fill="#d8d8d8"/>
<!-- sponge -->
<g><path d="M18 641c-.5-4 2.500-8 7-8.800 3-.5 6 .5 9 2.500l5 3.500c.8.600 1 1.500.8 2.500l-1.300 7c-.2 1-1.200 1.700-2.200 1.500l-2.300-.5-.8 1.500-5-1c-4 .3-9.500-2.500-10.200-8.200z" fill="#d8d8d8"/><circle cx="24.500" cy="641.500" r="2.700" fill="#323232"/></g>
<!-- pen -->
<g fill="none" stroke="#d8d8d8" stroke-width="1.500" stroke-linejoin="round"><path d="M31 672l6.500 5-4 8.500-13.500 3.500 5-13z"/><path d="M20.500 688.500l7.500-7.500"/><circle cx="28.800" cy="680.200" r="1.500" fill="#d8d8d8"/><path d="M32.500 669.500l7 5.500-2 2.500-7-5.500z" fill="#d8d8d8"/></g>
<!-- type -->
<path d="M20 707.600h18.500v4.800h-1.600c-.3-2-1-2.800-3-2.800h-3.200v14c0 1.300.8 1.700 2.800 1.800v1.300h-8.500v-1.300c2-.1 2.800-.5 2.800-1.800v-14h-3.200c-2 0-2.700.8-3 2.800H20z" fill="#d8d8d8"/>
<!-- path selection -->
<path d="M22.300 744.500v17.500l4.300-4 3.300 7.500 2.600-1.200-3.300-7.300h6z" fill="#0a0a0a" stroke="#e6e6e6" stroke-width="1.500" stroke-linejoin="round"/>
<!-- polygon -->
<path d="M23.500 783.800h10.500l5 8-5 8h-10.500l-5-8z" fill="#5c5c5c" stroke="#d8d8d8" stroke-width="1.500" stroke-linejoin="round"/>
<!-- hand -->
<g fill="#d8d8d8"><rect x="24.300" y="821" width="2.700" height="12" rx="1.300"/><rect x="27.600" y="818.700" width="2.700" height="14" rx="1.300"/><rect x="30.900" y="819.700" width="2.700" height="13" rx="1.300"/><rect x="34.200" y="822.500" width="2.600" height="11" rx="1.300"/><path d="M24.300 828.500h12.500v4.500c0 4.500-2.800 7.500-6.800 7.500-3.300 0-5.300-1.300-7.300-4.300l-4-6.200c-.8-1.300.8-2.700 2-1.700l3.600 3.200z"/></g>
<!-- zoom -->
<g fill="none" stroke="#d8d8d8"><circle cx="25.500" cy="863.800" r="7.800" stroke-width="1.700"/><path d="M31.300 869.800l7.500 7.300" stroke-width="2.600" stroke-linecap="round"/><path d="M25.500 859a5 5 0 0 1 4.800 4" stroke-width="1.100"/></g>
<!-- dots -->
<g fill="#d8d8d8"><circle cx="20.400" cy="905" r="2.600"/><circle cx="28.300" cy="905" r="2.600"/><circle cx="36.500" cy="905" r="2.600"/></g>
<!-- default colors -->
<rect x="12.600" y="936.500" width="10.400" height="10.200" fill="#dcdcdc"/><rect x="7.400" y="931.900" width="10.200" height="9.600" fill="#0a0a0a" stroke="#dcdcdc" stroke-width="1.300"/>
<!-- swap -->
<g fill="#dcdcdc"><path d="M32.400 935.300l4.300-4.300v2.900h6.800v6.200h2.800l-4.200 5.600-4.200-5.600h2.800v-3.400h-4v2.900z"/></g>
<!-- fg/bg -->
<rect x="24" y="969.900" width="23" height="27.600" fill="#f07a5c" stroke="#ffffff" stroke-width="2"/>
<rect x="6.800" y="953" width="29" height="28.500" fill="#323232"/>
<rect x="8.800" y="955" width="24.500" height="24.500" fill="#f03a3c" stroke="#ffffff" stroke-width="2"/>
<!-- quick mask -->
<rect x="18.300" y="1011.300" width="21.400" height="16" fill="none" stroke="#d8d8d8" stroke-width="1.500"/><circle cx="29" cy="1019.300" r="4.800" fill="none" stroke="#d8d8d8" stroke-width="1.400" stroke-dasharray="1.300 1.400"/>
<!-- screen mode -->
<rect x="25" y="1048.700" width="15" height="11" fill="#323232" stroke="#d8d8d8" stroke-width="1.500"/><path d="M25 1053.500h-6.700v11h15v-5" fill="none" stroke="#d8d8d8" stroke-width="1.500"/>
</svg>
<!-- brush name dialog -->
<div class="a" style="left:515px;top:250px;width:865px;height:185px;background:#323232;box-shadow:0 2px 9px 1px rgba(0,0,0,.5),0 0 0 1px rgba(30,30,30,.5)"></div>
<div class="a" style="left:515.500px;top:250px;width:864.500px;height:44px;background:#ffffff"></div>
<div class="t" style="left:527px;top:263px;font-size:18px;color:#000;">画笔名称</div>
<svg style="left:1347px;top:263px" width="17" height="17" viewBox="0 0 17 17"><path d="M1.500 1.500l14 14M15.500 1.500l-14 14" stroke="#111" stroke-width="1.300" fill="none"/></svg>
<!-- preview -->
<div class="a" style="left:538px;top:316px;width:95px;height:95px;background:#303030;border:1px solid #2b2b2b;box-sizing:border-box"></div>
<svg style="left:540px;top:318px" width="91" height="74" viewBox="540 318 91 74" font-family="Liberation Serif, Noto Serif CJK SC, serif"><circle cx="585.500" cy="354.500" r="37.500" fill="none" stroke="#bdbdbd" stroke-width="1.700"/><polygon points="585.7,345.0 588.0,351.5 594.8,351.6 589.4,355.8 591.3,362.4 585.7,358.4 580.1,362.4 582.0,355.8 576.6,351.6 583.4,351.5" fill="#bdbdbd"/>
<g fill="#a8a8a8" font-size="7.500" text-anchor="middle">
<text transform="translate(555.700 348.100) rotate(-77.850)" dy="2.500">天</text>
<text transform="translate(559 339.500) rotate(-60.550)" dy="2.500">天</text>
<text transform="translate(564.600 332.300) rotate(-43.250)" dy="2.500">同</text>
<text transform="translate(572 327) rotate(-25.950)" dy="2.500">上</text>
<text transform="translate(580.900 324.400) rotate(-8.650)" dy="2.500">科</text>
<text transform="translate(590.100 324.400) rotate(8.650)" dy="2.500">技</text>
<text transform="translate(599 327) rotate(25.950)" dy="2.500">有</text>
<text transform="translate(606.400 332.300) rotate(43.250)" dy="2.500">限</text>
<text transform="translate(612 339.500) rotate(60.550)" dy="2.500">公</text>
<text transform="translate(615.300 348.100) rotate(77.850)" dy="2.500">司</text>
<text x="585.500" y="376.500" font-size="7.500" letter-spacing="1.200">创意专用章</text>
</g></svg>
<div class="t" style="left:538px;top:396px;width:95px;text-align:center;font-size:15px;color:#cacaca;font-weight:300">712</div>
<div class="t" style="left:652px;top:324px;font-size:18.500px;color:#b6b6b6;font-weight:300;letter-spacing:0.400px">名称(N):</div>
<div class="a" style="left:737px;top:317px;width:479px;height:34px;background:#262626;border:1px solid #2a5290;box-sizing:border-box"></div>
<div class="t" style="left:742px;top:324px;font-size:18px;color:#e6e6e6;font-weight:300">盖印</div>
<div class="a" style="left:777px;top:322px;width:1px;height:22px;background:#e0e0e0"></div>
<div class="a" style="left:1233px;top:318px;width:123px;height:34px;border:1.500px solid #c4c4c4;border-radius:17px;box-sizing:border-box"></div>
<div class="t" style="left:1233px;top:329px;width:123px;text-align:center;font-size:18px;color:#dadada;font-weight:300;letter-spacing:1px">确定</div>
<!-- IME association popup -->
<div class="a" style="left:773px;top:345px;width:590px;height:115.500px;background:#fafafa;border-radius:8px;box-shadow:0 1px 3px rgba(0,0,0,.35),0 0 0 1px rgba(120,120,120,.35)"></div>
<div class="a" style="left:777px;top:400px;width:555px;height:1px;background:#e9e9e9"></div>
<div class="t ime" style="left:788px;top:364px;font-size:24px;color:#1e5878">词语联想:</div>
<div class="t ime" style="left:968px;top:369px;font-size:18.800px;color:#2a84b6">单击此处关闭联想</div>
<div class="a" style="left:1318px;top:351px;width:39px;height:42px;border-radius:6px;background:#f0632c"></div>
<div class="t ime" style="left:1323px;top:356px;font-size:30px;color:#fff;font-weight:900;transform:skewX(-8deg)">万</div>
<div class="t ime" style="left:790px;top:422.500px;font-size:23px;color:#c7283e"><span class="dg">1</span><span class="dg">.</span>印刷</div>
<div class="t ime" style="left:880px;top:422.500px;font-size:23px;color:#1f6fa2"><span class="dg">2</span><span class="dg">.</span>印花</div>
<div class="t ime" style="left:970px;top:422.500px;font-size:23px;color:#1f6fa2"><span class="dg">3</span><span class="dg">.</span>印度</div>
<div class="t ime" style="left:1061px;top:422.500px;font-size:23px;color:#1f6fa2"><span class="dg">4</span><span class="dg">.</span>印象</div>
<div class="t ime" style="left:1150px;top:422.500px;font-size:23px;color:#1f6fa2"><span class="dg">5</span><span class="dg">.</span>印尼</div>
<div class="t ime" style="left:1240px;top:422.500px;font-size:23px;color:#1f6fa2"><span class="dg">6</span><span class="dg">.</span>印章</div>
<svg style="left:1328px;top:426px" width="22" height="14" viewBox="0 0 22 14"><path d="M6 2L2 7l4 5" fill="none" stroke="#dcdcdc" stroke-width="1.500"/><path d="M14 2l4 5-4 5" fill="none" stroke="#2b4f6e" stroke-width="1.500"/></svg>
<!-- right dock header arrows -->
<svg style="left:1560px;top:97px" width="12" height="9" viewBox="0 0 12 9"><path d="M5 1.200L1.700 4.500L5 7.800M10.500 1.200L7.200 4.500l3.300 3.300" stroke="#c0c0c0" stroke-width="1.400" fill="none"/></svg>
<svg style="left:1898px;top:97px" width="12" height="9" viewBox="0 0 12 9"><path d="M1.500 1.200l3.300 3.300-3.300 3.300M7 1.200l3.300 3.300L7 7.800" stroke="#c0c0c0" stroke-width="1.400" fill="none"/></svg>
<!-- layers panel bg -->
<div class="a" style="left:1582.500px;top:111.500px;width:337.500px;height:966.500px;background:#292929"></div>
<!-- tabs -->
<div class="a" style="left:1582.500px;top:111.500px;width:337.500px;height:42px;background:#262626"></div>
<div class="a" style="left:1582.500px;top:111.500px;width:57.500px;height:42.500px;background:#323232"></div>
<div class="a" style="left:1640px;top:111px;width:2px;height:42px;background:#1e1e1e"></div>
<div class="a" style="left:1698px;top:111px;width:2px;height:42px;background:#1e1e1e"></div>
<div class="a" style="left:1755px;top:111px;width:2px;height:42px;background:#1e1e1e"></div>
<div class="t" style="left:1597px;top:125px;font-size:15px;color:#f2f2f2;">图层</div>
<div class="t" style="left:1654px;top:125px;font-size:15px;color:#a2a2a2;font-weight:300">通道</div>
<div class="t" style="left:1713px;top:125px;font-size:15px;color:#a2a2a2;font-weight:300">路径</div>
<div class="a" style="left:1894px;top:127px;width:16px;height:11px;background:repeating-linear-gradient(to bottom,#bdbdbd 0 1.600px,transparent 1.600px 3.100px)"></div>
<!-- panel body upper -->
<div class="a" style="left:1583px;top:153px;width:337px;height:135px;background:#323232"></div>
<div class="a" style="left:1583px;top:200px;width:337px;height:1px;background:#292929"></div>
<div class="a" style="left:1583px;top:243px;width:337px;height:1px;background:#292929"></div>
<!-- filter row -->
<div class="a" style="left:1590px;top:170px;width:102px;height:28px;background:#2b2b2b;border:1px solid #282828;border-radius:3px;box-sizing:border-box"></div>
<svg style="left:1600px;top:175px" width="18" height="18" viewBox="0 0 18 18"><circle cx="7" cy="7" r="5" fill="none" stroke="#d6d6d6" stroke-width="2"/><path d="M10.800 10.800l5 5" stroke="#d6d6d6" stroke-width="2.600" stroke-linecap="round"/></svg>
<div class="t" style="left:1621px;top:176px;font-size:15px;color:#858585;font-weight:300">类型</div>
<svg style="left:1678px;top:181px" width="11" height="7" viewBox="0 0 11 7"><path d="M1.200 1.200L5.500 5.200L9.800 1.200" fill="none" stroke="#484848" stroke-width="1.500"/></svg>
<!-- filter icons -->
<svg style="left:1715px;top:172px" width="18" height="16" viewBox="0 0 18 16"><rect x="0.800" y="1.300" width="16.400" height="13" fill="none" stroke="#d2d2d2" stroke-width="1.500"/><path d="M3.500 11.500l3-4 2.300 2.800 2.200-3.300 3.500 4.500z" fill="#d2d2d2"/></svg>
<svg style="left:1752px;top:172px" width="16" height="16" viewBox="0 0 16 16"><circle cx="8" cy="8" r="6.800" fill="none" stroke="#d2d2d2" stroke-width="1.500"/><path d="M12.800 3.200A6.800 6.800 0 0 1 3.200 12.800z" fill="#d2d2d2"/></svg>
<div class="t" style="left:1788px;top:170px;font-size:21px;color:#d6d6d6;font-family:'Liberation Serif',serif;font-weight:bold">T</div>
<svg style="left:1823px;top:171px" width="18" height="18" viewBox="0 0 18 18"><rect x="2.800" y="2.800" width="12.400" height="12.400" fill="none" stroke="#d2d2d2" stroke-width="1.500"/><g fill="#323232" stroke="#d2d2d2" stroke-width="1.200"><rect x="0.800" y="0.800" width="3.600" height="3.600"/><rect x="13.600" y="0.800" width="3.600" height="3.600"/><rect x="0.800" y="13.600" width="3.600" height="3.600"/><rect x="13.600" y="13.600" width="3.600" height="3.600"/></g></svg>
<svg style="left:1860px;top:171px" width="17" height="18" viewBox="0 0 17 18"><path d="M5.500 6V1.200h6.300l4 4V14h-5" fill="none" stroke="#d2d2d2" stroke-width="1.400"/><path d="M11.500 1.500v4.200h4" fill="none" stroke="#d2d2d2" stroke-width="1.200"/><rect x="1" y="8.500" width="8" height="8" fill="#d2d2d2"/></svg>
<div class="a" style="left:1899px;top:168px;width:12px;height:25px;border-radius:6px;background:#2a2a2a;border:1px solid #383838;box-sizing:border-box"></div>
<div class="a" style="left:1899px;top:167.500px;width:12px;height:12px;border-radius:50%;background:#d4d4d4"></div>
<!-- blend row -->
<div class="a" style="left:1589px;top:212px;width:172px;height:28px;background:#2d2d2d;border:1px solid #282828;border-radius:3px;box-sizing:border-box"></div>
<div class="t" style="left:1601px;top:218px;font-size:15px;color:#8a8a8a;font-weight:300">正常</div>
<svg style="left:1746px;top:224px" width="11" height="7" viewBox="0 0 11 7"><path d="M1.200 1.200L5.500 5.200L9.800 1.200" fill="none" stroke="#484848" stroke-width="1.500"/></svg>
<div class="t" style="left:1771px;top:214px;font-size:14.500px;color:#808080;font-weight:300">不透明度:</div>
<div class="a" style="left:1842px;top:212px;width:67px;height:21px;background:#2c2c2c;border:1px solid #282828;border-radius:3px;box-sizing:border-box"></div>
<div class="a" style="left:1888px;top:213px;width:1px;height:19px;background:#383838"></div>
<div class="t" style="left:1846px;top:216px;font-size:13px;color:#6c6c6c">87%</div>
<svg style="left:1893px;top:219px" width="12" height="8" viewBox="0 0 12 8"><path d="M1.500 1.500L6 6l4.500-4.500" fill="none" stroke="#cdcdcd" stroke-width="1.500"/></svg>
<!-- lock row -->
<div class="t" style="left:1591px;top:256px;font-size:14.500px;color:#808080;font-weight:300">锁定:</div>
<svg style="left:1640px;top:256px" width="16" height="16" viewBox="0 0 16 16"><rect x="0.700" y="0.700" width="14.600" height="14.600" fill="none" stroke="#d6d6d6" stroke-width="1.400"/><g fill="#d6d6d6"><rect x="1.500" y="1.500" width="4.300" height="4.300"/><rect x="10.200" y="1.500" width="4.300" height="4.300"/><rect x="5.800" y="5.800" width="4.400" height="4.400"/><rect x="1.500" y="10.200" width="4.300" height="4.300"/><rect x="10.200" y="10.200" width="4.300" height="4.300"/></g></svg>
<svg style="left:1672px;top:254px" width="20" height="20" viewBox="0 0 20 20"><path d="M18.500 1.200C14 3.800 10 8.200 7.800 12l2.300 1.900C13 10.500 16.500 6 18.500 1.200z" fill="#d6d6d6"/><path d="M7 13c-2.300-.2-3.600 1.300-3.800 3.200-.1.900-.8 1.700-1.900 2.200 3 .8 6.300-.3 7.600-3.500z" fill="#d6d6d6"/></svg>
<svg style="left:1704px;top:255px" width="18" height="18" viewBox="0 0 18 18"><path d="M9 2.500v13M2.500 9h13" stroke="#d6d6d6" stroke-width="1.600" fill="none"/><path d="M9 0.300l3 3.600H6zM9 17.700l3-3.600H6zM0.300 9l3.600-3v6zM17.700 9l-3.600-3v6z" fill="#d6d6d6"/></svg>
<svg style="left:1736px;top:255px" width="22" height="19" viewBox="0 0 22 19"><path d="M4.500 3.500h10l3.500 3.500v8.500h-13.500z" fill="none" stroke="#d6d6d6" stroke-width="1.600"/><path d="M14 3.500v4h4" fill="none" stroke="#d6d6d6" stroke-width="1.200"/><path d="M0.500 3.500h2M4.500 0v2M19.500 15.500h2M18 17v2M0.500 15.500h2M4.500 17v2M18 0v2" stroke="#d6d6d6" stroke-width="1.400"/></svg>
<svg style="left:1772px;top:255px" width="16" height="18" viewBox="0 0 16 18"><path d="M4.300 8V5.500a3.700 3.700 0 0 1 7.400 0V8" fill="none" stroke="#d6d6d6" stroke-width="1.800"/><rect x="1.200" y="7.500" width="13.600" height="9.800" rx="1" fill="#d6d6d6"/><circle cx="8" cy="12.300" r="1.500" fill="#323232"/></svg>
<div class="t" style="left:1801px;top:256px;font-size:14.500px;color:#808080;font-weight:300">填充:</div>
<div class="a" style="left:1842px;top:254px;width:67px;height:21px;background:#2c2c2c;border:1px solid #282828;border-radius:3px;box-sizing:border-box"></div>
<div class="a" style="left:1888px;top:255px;width:1px;height:19px;background:#383838"></div>
<div class="t" style="left:1846px;top:258px;font-size:13px;color:#6c6c6c">100%</div>
<svg style="left:1893px;top:261px" width="12" height="8" viewBox="0 0 12 8"><path d="M1.500 1.500L6 6l4.500-4.500" fill="none" stroke="#cdcdcd" stroke-width="1.500"/></svg>
<div class="a" style="left:1583px;top:288.5px;width:45px;height:60px;background:#323232"></div>
<div class="a" style="left:1628px;top:288.5px;width:266px;height:60px;background:#323232"></div>
<div class="a" style="left:1628px;top:288.5px;width:1px;height:60px;background:#2e2e2e"></div>
<div class="a" style="left:1596.500px;top:310.0px;width:18px;height:18px;border:1px solid #3d3d3d;box-sizing:border-box"></div>
<div class="a" style="left:1635.7px;top:295.6px;width:45.800px;height:45.800px;background:repeating-conic-gradient(#d2d2d2 0 25%,#ffffff 0 50%) 0 0/8px 8px;box-shadow:0 0 0 0.500px #8f8f8f"></div>
<div class="a" style="left:1635.7px;top:302.1px;width:39px;height:38.500px;background:#1e1e1e"></div>
<svg style="left:1635.7px;top:302.1px" width="39" height="38.500" viewBox="0 0 39 38.500"><defs><filter id="nz" x="0" y="0" width="100%" height="100%"><feTurbulence type="fractalNoise" baseFrequency="0.22" numOctaves="3" seed="4"/><feColorMatrix type="matrix" values="0 0 0 0 0.300  0 0 0 0 0.300  0 0 0 0 0.300  0 2 0 0 -0.850"/></filter></defs><rect width="39" height="38.500" filter="url(#nz)" opacity="0.550"/></svg>
<div class="t" style="left:1696px;top:310.0px;font-size:15px;color:#f0f0f0;font-weight:300;letter-spacing:0.300px">图层 1</div>
<div class="a" style="left:1583px;top:348.5px;width:311px;height:1px;background:#2b2b2b"></div>
<div class="a" style="left:1583px;top:350.0px;width:45px;height:60px;background:#323232"></div>
<div class="a" style="left:1628px;top:350.0px;width:266px;height:60px;background:#4b4b4b"></div>
<div class="a" style="left:1628px;top:350.0px;width:1px;height:60px;background:#2e2e2e"></div>
<svg style="left:1596px;top:373.5px" width="21" height="14" viewBox="0 0 21 14"><path d="M0.500 7C3 2.800 6.500 0.800 10.500 0.800S18 2.800 20.500 7C18 11.200 14.500 13.200 10.500 13.200S3 11.200 0.500 7z" fill="#e2e2e2"/><circle cx="10.500" cy="6.800" r="3.900" fill="#2a2a2a"/><circle cx="9.300" cy="5.500" r="1.100" fill="#9a9a9a"/></svg>
<div class="a" style="left:1635.7px;top:357.1px;width:45.800px;height:45.800px;background:repeating-conic-gradient(#d2d2d2 0 25%,#ffffff 0 50%) 0 0/8px 8px;box-shadow:0 0 0 0.500px #8f8f8f"></div>
<svg style="left:1635.7px;top:357.1px" width="47" height="47" viewBox="0.400 0.400 47 47"><circle cx="23.300" cy="23.300" r="16.2" fill="none" stroke="#f3c4c8" stroke-width="0.800"/><circle cx="23.300" cy="23.300" r="11.800" fill="none" stroke="#f3c4c8" stroke-width="0.600" opacity="0.600"/><polygon points="23.3,19.5 24.2,22.1 26.9,22.1 24.7,23.8 25.5,26.4 23.3,24.8 21.1,26.4 21.9,23.8 19.7,22.1 22.4,22.1" fill="#f0a8ae"/></svg>
<svg style="left:1631.2px;top:352.9px" width="55" height="55" viewBox="0 0 55 55"><path d="M0.700 17V0.700H19M36 0.700H54.300V17M54.300 38V54.300H36M19 54.300H0.700V38" fill="none" stroke="#f0f0f0" stroke-width="1.400"/></svg>
<div class="t" style="left:1696px;top:371.5px;font-size:15px;color:#f0f0f0;font-weight:300;letter-spacing:0.300px">盖印</div>
<div class="a" style="left:1583px;top:410.0px;width:311px;height:1px;background:#2b2b2b"></div>
<div class="a" style="left:1583px;top:411.5px;width:45px;height:60px;background:#323232"></div>
<div class="a" style="left:1628px;top:411.5px;width:266px;height:60px;background:#323232"></div>
<div class="a" style="left:1628px;top:411.5px;width:1px;height:60px;background:#2e2e2e"></div>
<div class="a" style="left:1596.500px;top:433.0px;width:18px;height:18px;border:1px solid #3d3d3d;box-sizing:border-box"></div>
<div class="a" style="left:1635.7px;top:418.6px;width:45.800px;height:45.800px;background:repeating-conic-gradient(#d2d2d2 0 25%,#ffffff 0 50%) 0 0/8px 8px;box-shadow:0 0 0 0.500px #8f8f8f"></div>
<svg style="left:1635.7px;top:418.6px" width="47" height="47" viewBox="0.400 0.400 47 47"><circle cx="23.300" cy="23.300" r="16.2" fill="none" stroke="#e58890" stroke-width="0.800"/><circle cx="23.300" cy="23.300" r="12.500" fill="none" stroke="#e58890" stroke-width="0.600" stroke-dasharray="1.500 1" opacity="0.700"/><polygon points="23.3,19.5 24.2,22.1 26.9,22.1 24.7,23.8 25.5,26.4 23.3,24.8 21.1,26.4 21.9,23.8 19.7,22.1 22.4,22.1" fill="#c62c3a"/></svg>
<div class="t" style="left:1696px;top:433.0px;font-size:15px;color:#f0f0f0;font-weight:300;letter-spacing:0.300px">印章</div>
<div class="a" style="left:1583px;top:471.5px;width:311px;height:1px;background:#2b2b2b"></div>
<div class="a" style="left:1583px;top:473.0px;width:45px;height:60px;background:#323232"></div>
<div class="a" style="left:1628px;top:473.0px;width:266px;height:60px;background:#323232"></div>
<div class="a" style="left:1628px;top:473.0px;width:1px;height:60px;background:#2e2e2e"></div>
<div class="a" style="left:1596.500px;top:494.5px;width:18px;height:18px;border:1px solid #3d3d3d;box-sizing:border-box"></div>
<div class="a" style="left:1635.7px;top:480.1px;width:45.800px;height:45.800px;background:#ffffff;box-shadow:0 0 0 0.500px #8f8f8f"></div>
<svg style="left:1635.7px;top:480.1px" width="47" height="47" viewBox="0.400 0.400 47 47"><circle cx="23.300" cy="23.300" r="16.2" fill="none" stroke="#e8848c" stroke-width="0.800"/><circle cx="23.300" cy="23.300" r="12.500" fill="none" stroke="#e8848c" stroke-width="0.600" stroke-dasharray="1.500 1" opacity="0.700"/><polygon points="23.3,19.5 24.2,22.1 26.9,22.1 24.7,23.8 25.5,26.4 23.3,24.8 21.1,26.4 21.9,23.8 19.7,22.1 22.4,22.1" fill="#d83a48"/><rect x="17.500" y="31" width="12" height="1.300" fill="#e8848c" opacity="0.600"/></svg>
<div class="t" style="left:1696px;top:494.5px;font-size:15px;color:#f0f0f0;font-weight:300;letter-spacing:0.300px">效果图</div>
<div class="a" style="left:1583px;top:533.0px;width:311px;height:1px;background:#2b2b2b"></div>
<div class="a" style="left:1583px;top:534.5px;width:45px;height:60px;background:#323232"></div>
<div class="a" style="left:1628px;top:534.5px;width:266px;height:60px;background:#323232"></div>
<div class="a" style="left:1628px;top:534.5px;width:1px;height:60px;background:#2e2e2e"></div>
<div class="a" style="left:1596.500px;top:556.0px;width:18px;height:18px;border:1px solid #3d3d3d;box-sizing:border-box"></div>
<div class="a" style="left:1635.7px;top:541.6px;width:45.800px;height:45.800px;background:#ffffff;box-shadow:0 0 0 0.500px #8f8f8f"></div>
<div class="t" style="left:1696px;top:556.0px;font-size:15px;color:#f0f0f0;font-weight:300;letter-spacing:0.300px">背景</div>
<svg style="left:1855px;top:555.5px" width="16" height="18" viewBox="0 0 16 18"><path d="M4.300 8V5.300a3.700 3.700 0 0 1 7.400 0V8" fill="none" stroke="#d0d0d0" stroke-width="1.500"/><rect x="1.500" y="8" width="13" height="8.800" fill="none" stroke="#d0d0d0" stroke-width="1.500"/><circle cx="8" cy="12.400" r="1.500" fill="#d0d0d0"/></svg>
<div class="a" style="left:1583px;top:594.5px;width:311px;height:1px;background:#2b2b2b"></div>
<div class="a" style="left:1583px;top:1044px;width:337px;height:34px;background:#323232"></div>
<!-- dock icon column -->
<div class="a" style="left:1523px;top:213px;width:58px;height:1.500px;background:#232323"></div>
<div class="a" style="left:1523px;top:317px;width:58px;height:1.500px;background:#232323"></div>
<div class="a" style="left:1523px;top:420px;width:58px;height:1.500px;background:#232323"></div>
<div class="a" style="left:1523px;top:567px;width:58px;height:1.500px;background:#232323"></div>
<div class="a grip" style="left:1537px;top:114px"></div>
<div class="a grip" style="left:1537px;top:218px"></div>
<div class="a grip" style="left:1537px;top:322px"></div>
<div class="a grip" style="left:1537px;top:425px"></div>
<!-- history -->
<svg style="left:1542px;top:134px" width="25" height="27" viewBox="0 0 25 27"><rect x="1.800" y="1.800" width="6" height="6" fill="none" stroke="#d8d8d8" stroke-width="1.500"/><rect x="1.800" y="10.800" width="6" height="6" fill="none" stroke="#d8d8d8" stroke-width="1.500"/><rect x="1" y="19.500" width="7.600" height="7" fill="#d8d8d8"/><path d="M14.500 23.500c7-2.500 9.500-11 3.500-18" fill="none" stroke="#d8d8d8" stroke-width="2.400"/><path d="M12.500 4.200l8.500-2.700-1.500 8.500z" fill="#d8d8d8"/></svg>
<!-- actions play -->
<svg style="left:1543px;top:178px" width="23" height="23" viewBox="0 0 23 23"><path d="M1.500 1L22 11.500L1.500 22z" fill="#d8d8d8"/></svg>
<!-- adjustments -->
<svg style="left:1541px;top:238px" width="25" height="25" viewBox="0 0 25 25"><circle cx="12.500" cy="12.500" r="10.500" fill="none" stroke="#d8d8d8" stroke-width="2"/><path d="M20 5A10.500 10.500 0 0 1 5 20z" fill="#d8d8d8"/></svg>
<!-- styles fx -->
<div class="a" style="left:1543px;top:281px;width:22px;height:20px;background:#d8d8d8"></div>
<div class="t" style="left:1539px;top:283px;font-size:28px;font-style:italic;color:#d8d8d8;font-family:'Liberation Sans',sans-serif;text-shadow:1.500px 0 0 #323232,-1.500px 0 0 #323232,0 1.500px 0 #323232,0 -1.500px 0 #323232,1px 1px 0 #323232,-1px -1px 0 #323232,1px -1px 0 #323232,-1px 1px 0 #323232;letter-spacing:-1px">fx</div>
<!-- brush settings -->
<svg style="left:1538px;top:340px" width="34" height="28" viewBox="0 0 34 28"><g fill="#d8d8d8"><rect x="1" y="2" width="3" height="3"/><rect x="5.500" y="2" width="5" height="3"/><rect x="1" y="7" width="3" height="3"/><rect x="5.500" y="7" width="5" height="3"/><rect x="1" y="12" width="3" height="3"/><rect x="5.500" y="12" width="5" height="3"/><path d="M32.500 5.500C26 9 20.500 14 17.500 18l3 2.500C24.500 16.500 30 10.500 32.500 5.500z"/><path d="M16.500 19c-3-.3-5 1.500-5.300 4-.2 1.200-1.200 2.200-2.700 2.700 4 1.200 8.500-.2 10.700-4.200z"/></g></svg>
<!-- brushes -->
<svg style="left:1537px;top:385px" width="33" height="26" viewBox="0 0 33 26"><g fill="#d8d8d8"><path d="M1 6c2-3.500 6-5 9-3.500 1.500.8 2.500 2 3 3.500-1 2-3 3-5.500 3S2.500 8 1 6z"/><rect x="12" y="4.500" width="20" height="2.600"/><rect x="3" y="16.500" width="18" height="2.600"/><path d="M21 17.800c1.500-3.500 5-6 8.500-8 2.500 3.500 3.200 9 1.500 13.500-4-.3-8-2.300-10-5.500z"/></g></svg>
<!-- 3D materials -->
<svg style="left:1541px;top:445px" width="25" height="26" viewBox="0 0 25 26"><g fill="#d8d8d8"><path d="M8 1l7 3.500v8L8 16 1 12.500v-8z" fill="#8a8a8a"/><path d="M8 1l7 3.500L8 8 1 4.500z" fill="#e0e0e0"/><path d="M8 8l7-3.500v8L8 16z" fill="#6a6a6a"/><path d="M8 1l7 3.500v8L8 16 1 12.500v-8z" fill="none" stroke="#d8d8d8" stroke-width="1.200"/><rect x="18" y="2" width="6" height="5"/><rect x="18" y="9.500" width="6" height="5"/><rect x="1" y="19" width="23" height="6"/></g><path d="M18.500 20.800h4l-2 2.600z" fill="#323232"/></svg>
<!-- character A| -->
<div class="t" style="left:1542px;top:486px;font-size:28px;color:#d8d8d8;font-family:'Liberation Sans',sans-serif">A</div>
<div class="a" style="left:1563.500px;top:487px;width:1.500px;height:26px;background:#d8d8d8"></div>
<!-- paragraph -->
<svg style="left:1545px;top:530px" width="20" height="25" viewBox="0 0 20 25"><path d="M9 13.500C4.500 13.500 1 11 1 7s3.500-6 8-6h9.500v2.200H16.500V24.500H14V3.200H11.500V24.500H9z" fill="#d8d8d8"/></svg>
<!-- layers footer icons -->
<svg style="left:1640px;top:1050px" width="245" height="24" viewBox="1640 1050 245 24">
<g fill="none" stroke="#8c8c8c" stroke-width="1.800"><path d="M1650.500 1055.800h-3.200a4.700 4.700 0 0 0 0 9.400h3.200M1654.500 1055.800h3.200a4.700 4.700 0 0 1 0 9.400h-3.200"/><path d="M1648.500 1060.500h8" stroke-width="2.400"/></g>
<path d="M1695.800 1069.200h5.400l-2.700 3z" fill="#e0e0e0"/><path d="M1768.600 1069.200h5.400l-2.700 3z" fill="#e0e0e0"/>
<rect x="1716" y="1052.500" width="19" height="14.500" fill="#d4d4d4"/><circle cx="1725.500" cy="1059.700" r="4.200" fill="#323232"/>
<circle cx="1762" cy="1059.800" r="7" fill="none" stroke="#d4d4d4" stroke-width="1.500"/><path d="M1767 1054.800A7 7 0 0 1 1757 1064.800z" fill="#d4d4d4"/>
<path d="M1789 1054.500c0-1 .7-1.700 1.700-1.700h5l1.800 2.200h8.200c1 0 1.700.7 1.700 1.700v9.300c0 1-.7 1.700-1.700 1.700h-15c-1 0-1.700-.7-1.700-1.700z" fill="#d4d4d4"/>
<path d="M1827.800 1053h14.400v14.400h-9.200l-5.200-5.200z" fill="none" stroke="#d4d4d4" stroke-width="1.600"/><path d="M1827.800 1062.200h5.200v5.200" fill="none" stroke="#d4d4d4" stroke-width="1.400"/>
<g fill="none" stroke="#d4d4d4" stroke-width="1.500"><path d="M1864.800 1056.500v11.500h12.400v-11.500"/><path d="M1863 1055.300h16" stroke-width="1.800"/><path d="M1868 1055v-2.800h6v2.800"/><path d="M1868.200 1058v8M1871 1058v8M1873.800 1058v8" stroke-width="1.300"/></g>
</svg>
<div class="t" style="left:1681px;top:1049px;font-size:21px;font-style:italic;color:#d4d4d4;font-family:'Liberation Sans',sans-serif;letter-spacing:-0.500px">fx</div>
<!-- mouse cursor -->
<svg style="left:280px;top:823px" width="13" height="19" viewBox="0 0 13 19"><path d="M0.700 0.800v14.200l3.200-3 2.300 5.200 2-0.900-2.300-5h4.500z" fill="#ffffff" stroke="#0a0a0a" stroke-width="1" stroke-linejoin="round"/></svg>
</div>
</body>
</html>
